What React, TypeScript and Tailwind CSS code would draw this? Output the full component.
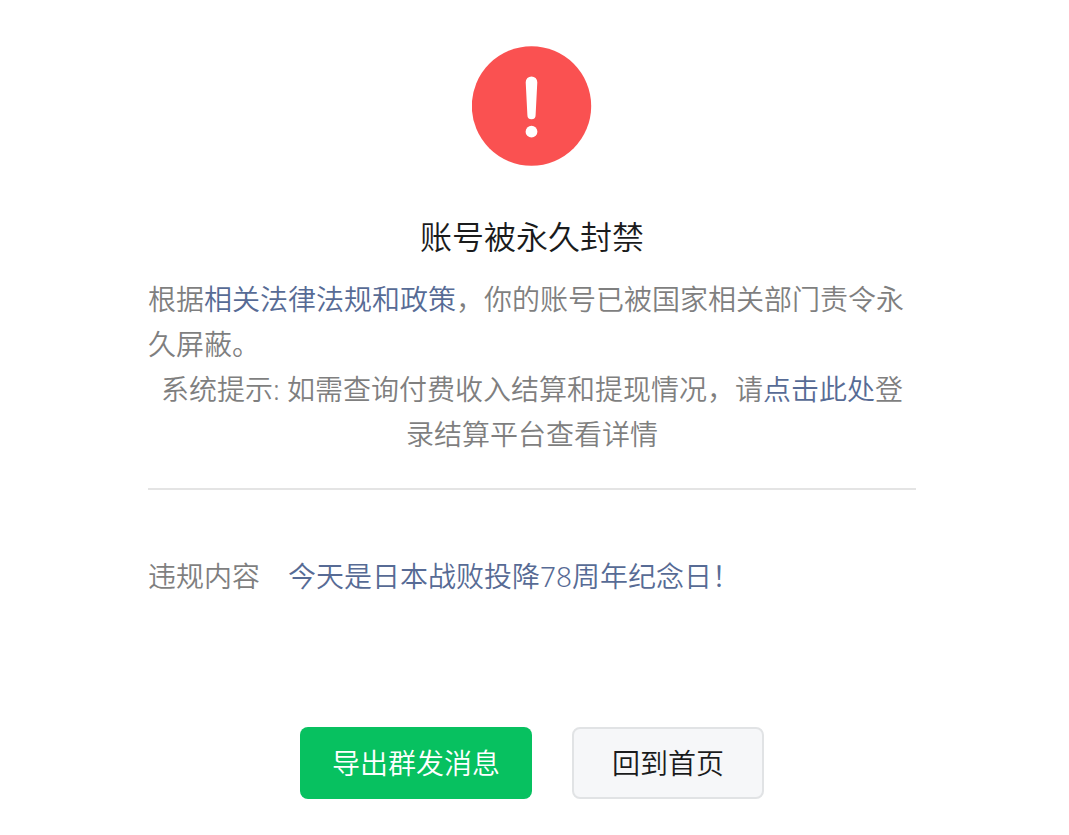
import type { ReactNode } from 'react';

interface TextLinkProps {
  href: string;
  children: ReactNode;
}

function TextLink({ href, children }: TextLinkProps) {
  return (
    <a href={href} className="text-[#576b95] hover:underline">
      {children}
    </a>
  );
}

function WarnIcon() {
  return (
    <svg viewBox="0 0 120 120" className="size-[120px]" role="img" aria-label="警告">
      <circle cx="59.5" cy="60" r="59.7" fill="#fa5151" />
      <path
        d="M53.7 36.2a5.8 5.8 0 0 1 11.6 0L63.6 69.2a4.1 4.1 0 0 1-8.2 0Z"
        fill="#fff"
      />
      <circle cx="59.5" cy="85.7" r="5.9" fill="#fff" />
    </svg>
  );
}

export default function App() {
  return (
    <main className="min-h-screen bg-white pt-[46px] pr-[5px] pb-9 font-['Noto_Sans','Noto_Sans_CJK_SC',sans-serif] text-[28px] leading-[45px] font-[350] text-[#7f7f7f]">
      <div className="mx-auto flex max-w-3xl flex-col">
        <header className="flex flex-col items-center gap-12">
          <WarnIcon />
          <h1 className="text-[32px] leading-[45px] text-[#1a1b1c]">账号被永久封禁</h1>
        </header>

        <section className="mt-[18px] border-b-2 border-[#e4e4e4] pb-[31px]">
          <p>
            根据<TextLink href="#policy">相关法律法规和政策</TextLink>，你的账号已被国家相关部门责令永久屏蔽。
          </p>
          <p className="text-center">
            系统提示: 如需查询付费收入结算和提现情况，请<TextLink href="#settlement">点击此处</TextLink>登录结算平台查看详情
          </p>
        </section>

        <dl className="mt-16 flex gap-7">
          <dt className="shrink-0">违规内容</dt>
          <dd>
            <TextLink href="#article">今天是日本战败投降78周年纪念日！</TextLink>
          </dd>
        </dl>

        <div className="mt-32 flex justify-center gap-10">
          <button
            type="button"
            className="h-[72px] w-[232px] rounded-lg bg-[#07c160] text-white hover:bg-[#06ad56]"
          >
            导出群发消息
          </button>
          <button
            type="button"
            className="h-[72px] w-48 rounded-lg border-2 border-[#e1e3e5] bg-[#f6f7f9] text-[#1a1b1c] hover:bg-[#eceef0]"
          >
            回到首页
          </button>
        </div>
      </div>
    </main>
  );
}
